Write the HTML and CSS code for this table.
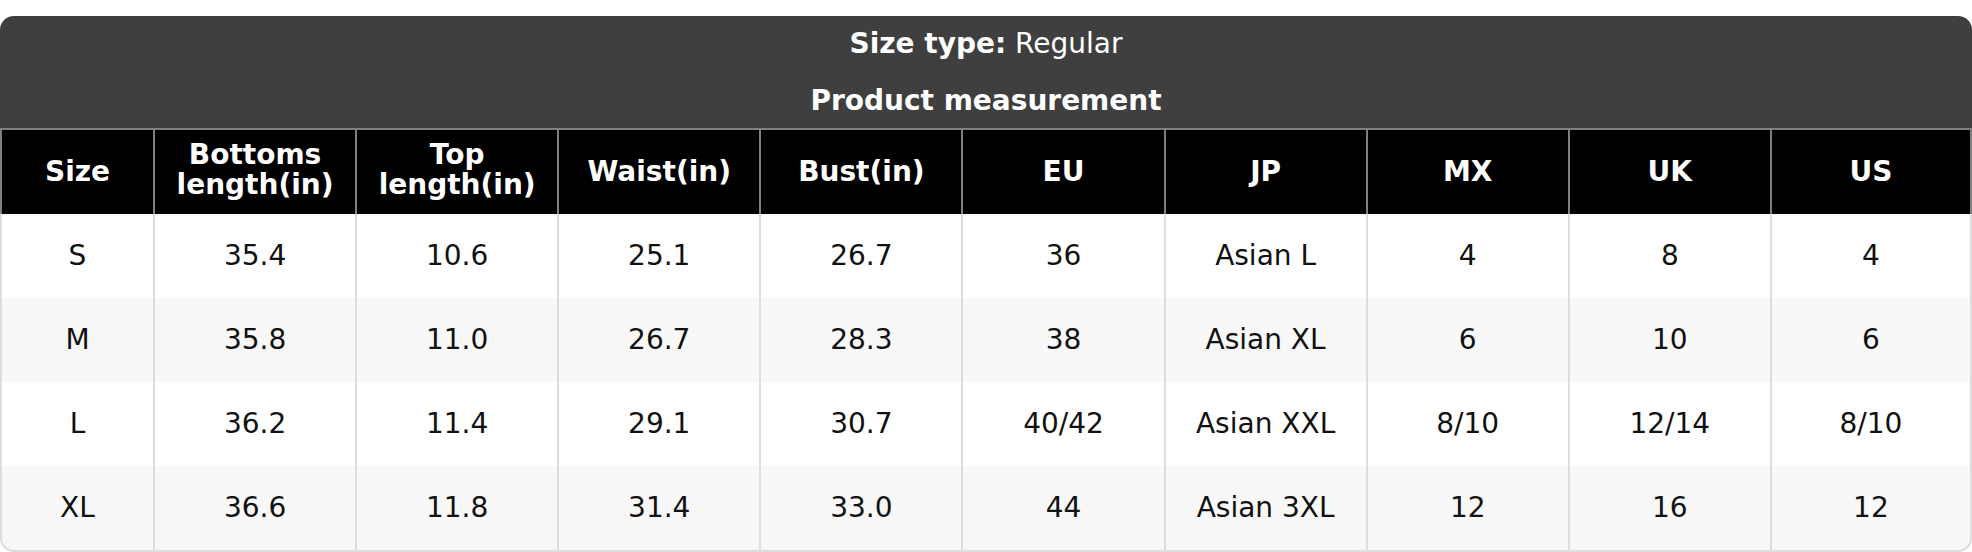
FILE: index.html
```html
<!DOCTYPE html>
<html lang="en">
<head>
<meta charset="utf-8">
<title>Size chart</title>
<link rel="stylesheet" href="styles.css">
</head>
<body>
<div class="chart">
  <div class="title">
    <div class="title-line"><strong>Size type:</strong> Regular</div>
    <div class="title-line"><strong>Product measurement</strong></div>
  </div>
  <table class="sizes">
    <colgroup>
      <col class="col-size">
      <col><col><col><col><col><col><col><col><col>
    </colgroup>
    <thead>
      <tr>
        <th class="single">Size</th>
        <th>Bottoms length(in)</th>
        <th>Top length(in)</th>
        <th class="single">Waist(in)</th>
        <th class="single">Bust(in)</th>
        <th class="single">EU</th>
        <th class="single">JP</th>
        <th class="single">MX</th>
        <th class="single">UK</th>
        <th class="single">US</th>
      </tr>
    </thead>
    <tbody>
      <tr>
        <td>S</td><td>35.4</td><td>10.6</td><td>25.1</td><td>26.7</td><td>36</td><td>Asian L</td><td>4</td><td>8</td><td>4</td>
      </tr>
      <tr>
        <td>M</td><td>35.8</td><td>11.0</td><td>26.7</td><td>28.3</td><td>38</td><td>Asian XL</td><td>6</td><td>10</td><td>6</td>
      </tr>
      <tr>
        <td>L</td><td>36.2</td><td>11.4</td><td>29.1</td><td>30.7</td><td>40/42</td><td>Asian XXL</td><td>8/10</td><td>12/14</td><td>8/10</td>
      </tr>
      <tr>
        <td>XL</td><td>36.6</td><td>11.8</td><td>31.4</td><td>33.0</td><td>44</td><td>Asian 3XL</td><td>12</td><td>16</td><td>12</td>
      </tr>
    </tbody>
  </table>
</div>
</body>
</html>
```

FILE: styles.css
```css
html, body {
  margin: 0;
  padding: 0;
  background: #ffffff;
}

body {
  font-family: "DejaVu Sans", "Liberation Sans", sans-serif;
  padding-top: 16px;
}

.chart {
  width: 1972px;
}

.title {
  background: #3f3f3f;
  color: #ffffff;
  border-radius: 14px 14px 0 0;
  text-align: center;
  font-size: 28px;
  line-height: 32px;
  padding: 12px 0 11px;
  display: flex;
  flex-direction: column;
  gap: 25px;
}

.title-line {
  font-weight: normal;
}

.title-line strong {
  font-weight: bold;
}

.sizes {
  width: 100%;
  table-layout: fixed;
  border-collapse: separate;
  border-spacing: 0;
  font-size: 28px;
}

.col-size {
  width: 153px;
}

.sizes th {
  background: #000000;
  color: #ffffff;
  font-weight: bold;
  line-height: 30px;
  height: 86px;
  padding: 0 8px 4px;
  text-align: center;
  vertical-align: middle;
  border-top: 2px solid #808080;
  border-left: 2px solid #808080;
  box-sizing: border-box;
}

.sizes th.single {
  padding-bottom: 0;
}

.sizes th:last-child {
  border-right: 2px solid #808080;
}

.sizes td {
  height: 84px;
  padding: 0 4px;
  text-align: center;
  vertical-align: middle;
  color: #111111;
  background: #ffffff;
  border-left: 2px solid #dddddd;
  line-height: 32px;
}

.sizes td:last-child {
  border-right: 2px solid #dddddd;
}

.sizes tbody tr:nth-child(even) td {
  background: #f8f8f8;
}

.sizes tbody tr:last-child td {
  border-bottom: 2px solid #dddddd;
}

.sizes tbody tr:last-child td:first-child {
  border-bottom-left-radius: 14px;
}

.sizes tbody tr:last-child td:last-child {
  border-bottom-right-radius: 14px;
}
```
